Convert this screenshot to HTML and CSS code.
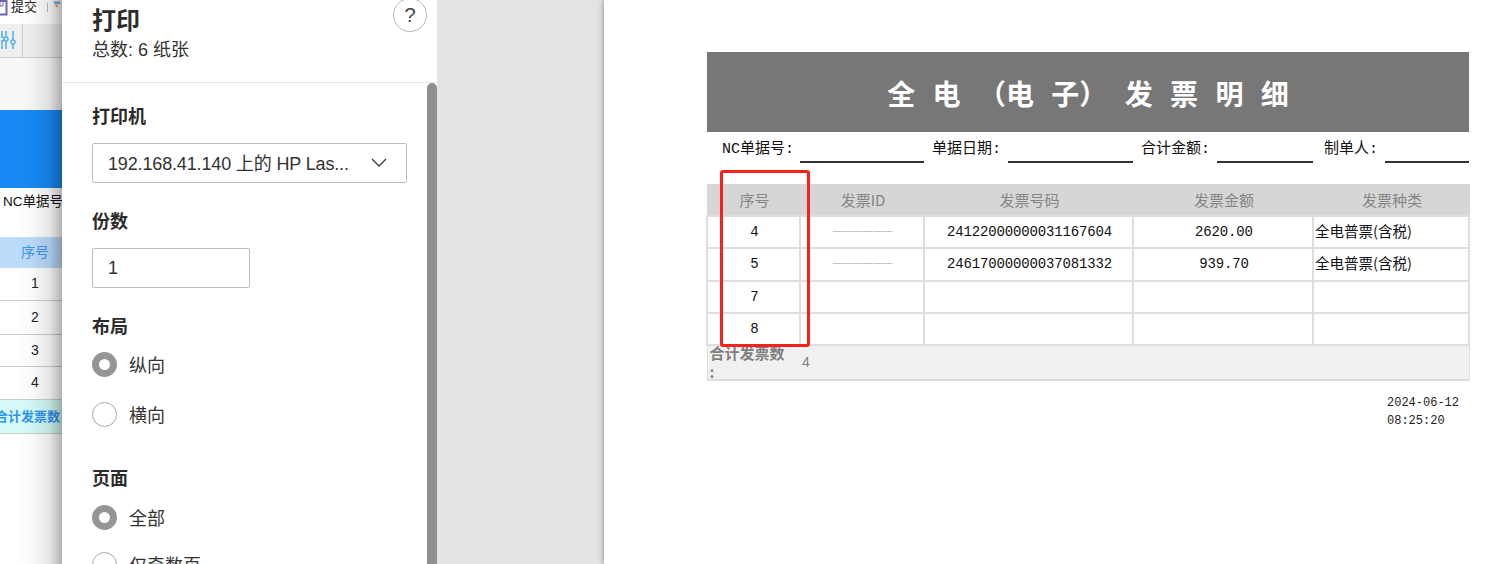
FILE: index.html
```html
<!DOCTYPE html>
<html lang="zh-CN">
<head>
<meta charset="utf-8">
<title>打印</title>
<link rel="stylesheet" href="styles.css">
</head>
<body>
<div class="app">
  <div class="behind">
    <div class="tb1">
      <svg class="ic-doc" width="8" height="16" viewBox="0 0 8 16"><path d="M-3 1H6.5V14.5H-3" fill="#fff" stroke="#6a66b0" stroke-width="2"/><path d="M0 1v5h3V1" fill="none" stroke="#6a66b0"/></svg>
      <span class="tb-text">提交</span>
      <span class="tb-sep"></span>
      <svg width="10" height="10" viewBox="0 0 10 10"><path d="M1 1h7v3H1z" fill="#7fb2e0"/><path d="M3 5l2 2" stroke="#e0a030" stroke-width="2"/></svg>
    </div>
    <div class="tb2">
      <svg class="ic-sliders" width="15" height="18" viewBox="0 0 15 18" fill="none" stroke="#5db1ee" stroke-width="1.6"><path d="M1 0v6M1 10v8M5 0v6M5 10v8M12 0v9M12 13v5"/><circle cx="5" cy="8" r="2"/><circle cx="1" cy="8" r="2"/><circle cx="12" cy="11" r="2"/></svg>
      <div class="tb2-tab"></div>
    </div>
    <div class="gap1"></div>
    <div class="banner"></div>
    <div class="nc">NC单据号</div>
    <div class="lt-head">序号</div>
    <div class="lt-row r1">1</div>
    <div class="lt-row r2">2</div>
    <div class="lt-row r3">3</div>
    <div class="lt-row r4">4</div>
    <div class="lt-total">合计发票数</div>
  </div>

  <aside class="panel">
    <header class="panel-head">
      <div>
        <h1 class="panel-title">打印</h1>
        <div class="panel-sub">总数: 6 纸张</div>
      </div>
      <div class="help">?</div>
    </header>
    <div class="panel-body">
      <div class="form">
        <div class="label label-first">打印机</div>
        <div class="select">
          <span>192.168.41.140 上的 HP Las...</span>
          <svg width="16" height="9" viewBox="0 0 16 9" fill="none" stroke="#3a3a3a" stroke-width="1.3"><path d="M1 1l7 7 7-7"/></svg>
        </div>
        <div class="label label-copies">份数</div>
        <div class="input">1</div>
        <div class="label label-layout">布局</div>
        <div class="radio radio-a"><span class="dot on"></span>纵向</div>
        <div class="radio radio-b"><span class="dot"></span>横向</div>
        <div class="label label-pages">页面</div>
        <div class="radio radio-c"><span class="dot on"></span>全部</div>
        <div class="radio radio-d"><span class="dot"></span>仅奇数页</div>
      </div>
      <div class="scrollbar"></div>
    </div>
  </aside>

  <div class="gutter"></div>

  <main class="sheet">
    <div class="doc">
      <div class="doc-title">全 电 （电 子） 发 票 明 细</div>
      <div class="meta">
        <span class="m-label m1">NC单据号:</span><span class="m-line l1"></span>
        <span class="m-label m2">单据日期:</span><span class="m-line l2"></span>
        <span class="m-label m3">合计金额:</span><span class="m-line l3"></span>
        <span class="m-label m4">制单人:</span><span class="m-line l4"></span>
      </div>
      <table class="grid">
        <colgroup><col class="c1"><col class="c2"><col class="c3"><col class="c4"><col class="c5"></colgroup>
        <thead>
          <tr><th>序号</th><th>发票ID</th><th>发票号码</th><th>发票金额</th><th>发票种类</th></tr>
        </thead>
        <tbody>
          <tr><td>4</td><td><span class="tiny"></span></td><td>24122000000031167604</td><td>2620.00</td><td class="left">全电普票(含税)</td></tr>
          <tr class="tall"><td>5</td><td><span class="tiny"></span></td><td>24617000000037081332</td><td>939.70</td><td class="left">全电普票(含税)</td></tr>
          <tr><td>7</td><td></td><td></td><td></td><td></td></tr>
          <tr><td>8</td><td></td><td></td><td></td><td></td></tr>
        </tbody>
        <tfoot>
          <tr><td class="t-label"><div class="t-wrap">合计发票数<br>:</div></td><td colspan="4" class="t-value">4</td></tr>
        </tfoot>
      </table>
      <div class="stamp">2024-06-12<br>08:25:20</div>
    </div>
    <div class="redbox"></div>
  </main>
</div>
</body>
</html>
```
FILE: styles.css
```css
* { box-sizing: border-box; }
html, body { margin: 0; height: 564px; overflow: hidden; background: #fff; }
body { font-family: "Liberation Sans", "Noto Sans CJK SC", sans-serif; color: #222; }
.app { display: flex; height: 564px; }

/* page behind the dialog */
.behind { position: relative; width: 62px; flex: none; overflow: hidden; background: #fff; }
.behind::after { content: ""; position: absolute; inset: 0; background: linear-gradient(90deg, rgba(0,0,0,0) 30%, rgba(0,0,0,.02) 50%, rgba(0,0,0,.1) 80%, rgba(0,0,0,.3) 100%); }
.tb1 { height: 24px; display: flex; align-items: flex-start; font-size: 13px; line-height: 14px; }
.ic-doc { flex: none; }
.tb-text { margin-left: 3px; width: 28px; flex: none; }
.tb-sep { width: 1px; height: 9px; margin: 3px 5px 0 8px; background: #bbb; flex: none; }
.tb2 { height: 34px; display: flex; background: #efeff1; border-bottom: 1px solid #ccc; }
.ic-sliders { margin: 7px 0 0 1px; flex: none; }
.tb2-tab { margin-left: 6px; width: 40px; border-left: 1px solid #ccc; }
.gap1 { height: 52px; background: #f8f8f9; }
.banner { height: 78px; background: #1789f4; }
.nc { height: 49px; padding: 5px 0 0 3px; font-size: 13.5px; line-height: 18px; color: #111; white-space: nowrap; }
.lt-head { height: 31px; background: #bcdcfb; color: #3a96f0; font-size: 14px; line-height: 31px; text-align: right; padding-right: 13px; }
.lt-row { border-bottom: 1px solid #ccc; font-size: 14px; text-align: center; width: 70px; }
.r1 { height: 33px; line-height: 31px; }
.r2 { height: 34px; line-height: 33px; }
.r3 { height: 32px; line-height: 31px; }
.r4 { height: 33px; line-height: 31px; }
.lt-total { height: 34px; background: #d4fbf7; border-bottom: 1px solid #ccc; color: #2f93f2; font-size: 13px; font-weight: 700; line-height: 34px; white-space: nowrap; margin-left: -5px; width: 72px; }

/* print panel */
.panel { width: 375px; flex: none; display: flex; flex-direction: column; background: #fff; }
.panel-head { height: 83px; flex: none; display: flex; justify-content: space-between; border-bottom: 1px solid #e8e8e8; padding: 0 10px 0 30px; }
.panel-title { margin: 6px 0 0; font-size: 24px; line-height: 30px; font-weight: 700; color: #2b2b2b; }
.panel-sub { font-size: 18px; line-height: 22px; margin-top: 3px; color: #333; }
.help { width: 34px; height: 34px; margin-top: -2px; border: 1px solid #b8b8b8; border-radius: 50%; text-align: center; font-size: 20px; line-height: 32px; color: #444; }
.panel-body { flex: 1; min-height: 0; display: flex; }
.form { flex: 1; padding-left: 30px; }
.scrollbar { width: 10px; background: #8f8f8f; border-radius: 5px 5px 0 0; }
.label { font-size: 18px; font-weight: 700; line-height: 22px; color: #2b2b2b; }
.label-first { margin-top: 23px; }
.select { margin-top: 15px; width: 315px; height: 40px; border: 1px solid #bdbdbd; border-radius: 2px; padding: 0 19px 2px 15px; display: flex; align-items: center; justify-content: space-between; font-size: 18px; letter-spacing: -.15px; color: #333; white-space: nowrap; }
.label-copies { margin-top: 28px; }
.input { margin-top: 15px; width: 158px; height: 40px; border: 1px solid #bdbdbd; border-radius: 2px; padding-left: 15px; font-size: 18px; line-height: 38px; color: #333; }
.label-layout { margin-top: 28px; }
.radio { display: flex; align-items: center; gap: 12px; height: 26px; font-size: 18px; color: #333; white-space: nowrap; }
.dot { width: 25px; height: 25px; flex: none; border-radius: 50%; border: 1px solid #a8a8a8; background: #fff; }
.dot.on { border: 7px solid #959595; }
.radio-a { margin-top: 13px; }
.radio-b { margin-top: 24px; }
.label-pages { margin-top: 41px; }
.radio-c { margin-top: 14px; }
.radio-d { margin-top: 21px; }

/* gray gutter */
.gutter { width: 167px; flex: none; background: #e4e4e4; }

/* sheet */
.sheet { position: relative; flex: 1; min-width: 0; background: #fff; padding: 52px 0 0 103px; box-shadow: 0 0 6px rgba(0,0,0,.45); }
.doc { width: 762px; font-family: "Liberation Mono", "Noto Sans CJK SC", monospace; }
.doc-title { height: 80px; background: #777; color: #fff; font-family: "Noto Sans CJK SC", sans-serif; font-size: 28px; font-weight: 700; line-height: 82px; text-align: center; white-space: pre; word-spacing: 11px; }
.meta { height: 31px; display: flex; font-size: 15px; color: #111; align-items: stretch; line-height: 35px; }
.m-label { flex: none; white-space: nowrap; }
.m-line { flex: none; border-bottom: 2px solid #333; }
.m1 { margin-left: 15px; width: 78px; }
.l1 { width: 124px; }
.m2 { margin-left: 8px; width: 76px; }
.l2 { width: 125px; }
.m3 { margin-left: 8px; width: 76px; }
.l3 { width: 96px; }
.m4 { margin-left: 11px; width: 61px; }
.l4 { width: 84px; }
.grid { margin: 21px 0 0 -1px; width: 762px; border-collapse: collapse; table-layout: fixed; font-size: 14px; }
.c1 { width: 93px; } .c2 { width: 124px; } .c3 { width: 209px; } .c4 { width: 180px; } .c5 { width: 156px; }
.grid th { height: 31px; background: #d6d6d6; color: #858585; font-size: 15px; font-weight: 400; padding: 0 0 0 2px; font-family: "Noto Sans CJK SC", sans-serif; border: 1px solid #d6d6d6; }
.grid td { height: 32px; border: 2px solid #dedede; padding: 0 0 0 2px; text-align: center; color: #111; white-space: nowrap; letter-spacing: -.15px; }
.grid .tall td { height: 33px; }
.grid td.left { text-align: left; padding: 0 0 3px 1px; font-family: "Noto Sans CJK SC", sans-serif; font-size: 14.5px; letter-spacing: 0; }
.tiny { display: block; width: 60px; height: 1px; margin: -1px auto 0 30px; background: repeating-linear-gradient(90deg, #c4c4c4 0 9px, #e4e4e4 9px 10px); }
.grid tfoot td { height: 35px; background: #f1f1f1; border-width: 1px 0 2px; border-color: #dedede; color: #7f7f7f; }
.grid td.t-label { text-align: left; padding-left: 2px; font-size: 15px; font-weight: 700; font-family: "Noto Sans CJK SC", sans-serif; line-height: 19px; border-left: 1px solid #dedede; vertical-align: top; letter-spacing: 0; white-space: normal; }
.t-wrap { height: 32px; margin-top: -3px; }
.grid td.t-value { text-align: left; padding-left: 2px; font-family: "Liberation Sans", sans-serif; font-size: 14px; border-right: 1px solid #dedede; }
.stamp { margin: 13px 0 0 680px; font-size: 12px; line-height: 18px; color: #222; white-space: nowrap; }
.redbox { position: absolute; left: 116px; top: 170px; width: 90px; height: 177px; border: 3px solid #f5221b; border-radius: 3px; }
```
